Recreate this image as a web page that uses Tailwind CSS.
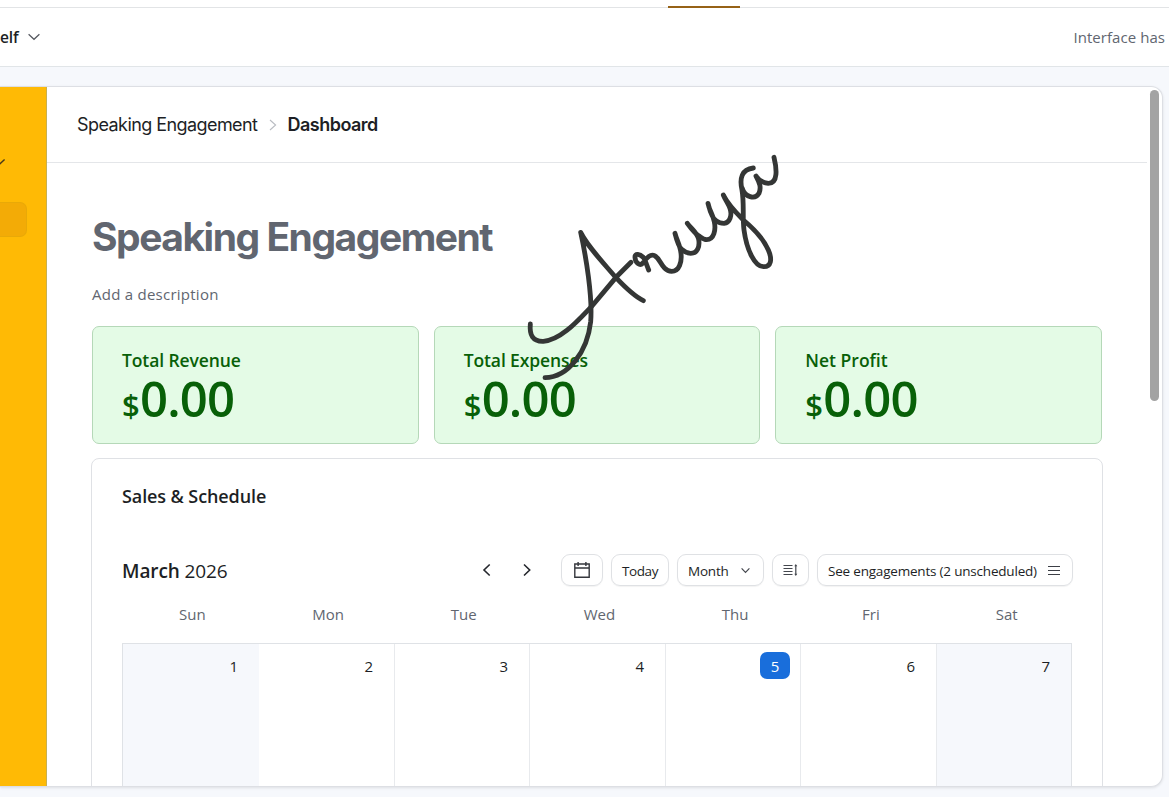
<!DOCTYPE html>
<html lang="en">
<head>
<meta charset="utf-8">
<title>Speaking Engagement – Dashboard</title>
<script src="https://cdn.jsdelivr.net/npm/@tailwindcss/browser@4"></script>
</head>
<body class="relative flex h-[797px] w-[1169px] flex-col overflow-hidden bg-[#f6f8fc] font-['Open_Sans',sans-serif] text-[#1d1f25]">
  <div class="flex h-2 shrink-0 border-b border-[#e2e4e6] bg-white pl-[668px]"><div class="mt-[6px] h-[2px] w-[72px] bg-[#966216]"></div></div>
  <header class="flex h-[59px] shrink-0 items-center justify-between border-b border-[#e1e5e8] bg-white pr-[4px]">
    <div class="flex items-center">
      <span class="pt-[2px] text-[15.5px] font-semibold tracking-[-0.1px]">elf</span>
      <svg class="ml-[9px] h-2 w-3" viewBox="0 0 12 8" fill="none" stroke="#55585f" stroke-width="1.2"><path d="M.6 1.2 6 6.3l5.4-5.1"/></svg>
    </div>
    <span class="text-[15px] tracking-[0.05px] text-[#616670]">Interface has</span>
  </header>
  <div class="mt-[19px] flex h-[701px] w-[1163px] shrink-0 overflow-hidden rounded-r-[12px] border border-l-0 border-[#dddfe4] bg-white shadow-[0_1px_3px_rgba(0,0,0,0.1)]">
    <aside class="flex w-[47px] shrink-0 flex-col border-r border-[#c8b050] bg-[#ffba05]">
      <svg class="mt-[71px] h-[8px] w-[6px]" viewBox="0 0 6 8" fill="none" stroke="#49391a" stroke-width="1.4"><path d="M-1 6.6 4.6 1.6"/></svg>
      <div class="mt-[36px] h-[35px] w-[27px] rounded-r-[7px] border border-l-0 border-[#e9a907] bg-[#f3ab06]"></div>
    </aside>
    <main class="relative flex min-w-0 grow flex-col">
      <nav class="mr-[15px] flex h-[76px] shrink-0 items-center border-b border-[#e4e6e9] pl-[30px] font-[Inter,sans-serif] text-[18px]">
        <span class="w-[181px] whitespace-nowrap tracking-[-0.57px]">Speaking Engagement</span>
        <svg class="ml-[11px] h-3 w-2" viewBox="0 0 8 12" fill="none" stroke="#b9bcc2" stroke-width="1.1"><path d="m1 1 5.6 5L1 11"/></svg>
        <span class="ml-[10.5px] font-semibold tracking-[-0.52px]">Dashboard</span>
      </nav>
      <div class="flex min-h-0 grow flex-col pl-[45px] pr-[60px]">
        <h1 class="mt-[48px] h-[52px] whitespace-nowrap font-[Inter,sans-serif] text-[39px] font-bold leading-[52px] tracking-[-1.48px] text-[#616670]">Speaking Engagement</h1>
        <p class="mt-[20px] h-[22px] text-[15px] leading-[22px] tracking-[0.25px] text-[#616670]">Add a description</p>
        <div class="mt-[21px] grid w-[1010px] shrink-0 grid-cols-3 gap-[15px] text-[#086008]">
          <section class="h-[118px] rounded-[7px] border border-[#b5d8b8] bg-[#e4fbe6] px-[29px] pt-[22px]">
            <h2 class="h-[22px] text-[17.5px] font-semibold leading-[22px] tracking-[-0.1px]">Total Revenue</h2>
            <div class="mt-[5px] flex h-[44px] items-baseline font-semibold leading-[44px]"><span class="w-[18px] text-[31px]">$</span><span class="text-[49px] leading-[44px] tracking-[-0.8px]">0.00</span></div>
          </section>
          <section class="h-[118px] rounded-[7px] border border-[#b5d8b8] bg-[#e4fbe6] px-[29px] pt-[22px]">
            <h2 class="h-[22px] text-[17.5px] font-semibold leading-[22px] tracking-[-0.1px]">Total Expenses</h2>
            <div class="mt-[5px] flex h-[44px] items-baseline font-semibold leading-[44px]"><span class="w-[18px] text-[31px]">$</span><span class="text-[49px] leading-[44px] tracking-[-0.8px]">0.00</span></div>
          </section>
          <section class="h-[118px] rounded-[7px] border border-[#b5d8b8] bg-[#e4fbe6] px-[29px] pt-[22px]">
            <h2 class="h-[22px] text-[17.5px] font-semibold leading-[22px]">Net Profit</h2>
            <div class="mt-[5px] flex h-[44px] items-baseline font-semibold leading-[44px]"><span class="w-[18px] text-[31px]">$</span><span class="text-[49px] leading-[44px] tracking-[-0.8px]">0.00</span></div>
          </section>
        </div>
        <section class="-ml-px mt-[14px] flex h-[400px] w-[1012px] shrink-0 flex-col rounded-t-[8px] border border-[#dfe1e5] px-[30px] pt-[25px]">
          <h2 class="h-6 shrink-0 text-[18px] font-semibold leading-6 tracking-[-0.1px]">Sales &amp; Schedule</h2>
          <div class="mt-[46px] flex h-[32px] shrink-0 items-center *:shrink-0">
            <div class="w-[360px] whitespace-nowrap pt-[2px] text-[19px] tracking-[-0.1px]"><span class="font-semibold">March</span> 2026</div>
            <svg class="h-[14px] w-[10px]" viewBox="0 0 10 14" fill="none" stroke="#25272d" stroke-width="1.6"><path d="M7.7 1.5 2 7l5.7 5.5"/></svg>
            <svg class="ml-[30px] h-[14px] w-[10px]" viewBox="0 0 10 14" fill="none" stroke="#25272d" stroke-width="1.6"><path d="M2 1.5 7.7 7 2 12.5"/></svg>
            <div class="ml-[29px] flex gap-2 text-[13.5px] tracking-[-0.2px] *:flex *:h-[32px] *:items-center *:rounded-[9px] *:border *:border-[#dfe1e4] *:shadow-[0_1px_1px_rgba(0,0,0,0.05)]">
              <button class="w-[42px] justify-center" aria-label="Pick date"><svg class="size-[18px]" viewBox="0 0 18 18" fill="none" stroke="#35373d" stroke-width="1.4"><path d="M1.8 3h14.4v13.2H1.8zM1.8 7h14.4M5.1 1v4M12.9 1v4"/></svg></button>
              <button class="w-[58px] justify-center pt-[2px] tracking-[-0.4px]">Today</button>
              <button class="w-[87px] pl-[10px]"><span class="w-[53px] pt-[2px] text-left">Month</span><svg class="h-[7px] w-[9px]" viewBox="0 0 9 7" fill="none" stroke="#44474e" stroke-width="1.2"><path d="m.6 1.3 3.9 4 3.9-4"/></svg></button>
              <button class="w-[37px] justify-center" aria-label="Row height"><svg class="h-[14px] w-[15px]" viewBox="0 0 15 14" fill="none" stroke="#44474e" stroke-width="1.2"><path d="M.5 2.5h9M.5 5.5h9M.5 8.5h9M.5 11.5h9M12.8 2.5v9"/><path d="M11.3 3.2 12.8 1l1.5 2.2M11.3 10.8l1.5 2.2 1.5-2.2" fill="#44474e" stroke="none"/></svg></button>
              <button class="w-[256px] pl-[10px]"><span class="w-[220px] whitespace-nowrap pt-[2px] text-left">See engagements (2 unscheduled)</span><svg class="mt-px h-[12px] w-[12px]" viewBox="0 0 12 12" fill="none" stroke="#3c3f46" stroke-width="1.2"><path d="M0 1.5h12M0 5.5h12M0 9.5h12"/></svg></button>
            </div>
          </div>
          <div class="mt-[16px] grid h-[41px] w-[950px] shrink-0 grid-cols-7 text-center text-[15px] leading-[24px] text-[#616670] *:pl-[5px]">
            <span>Sun</span><span>Mon</span><span>Tue</span><span>Wed</span><span>Thu</span><span>Fri</span><span>Sat</span>
          </div>
          <div class="grid w-[950px] grow grid-cols-[136px_136px_135px_136px_135px_136px_134px] border border-b-0 border-[#dfe2e6] text-right text-[15px] leading-[44px] *:border-[#e8eaed]">
            <div class="bg-[#f6f8fc] pr-[21px]">1</div>
            <div class="border-r pr-[21px]">2</div>
            <div class="border-r pr-[21px]">3</div>
            <div class="border-r pr-[21px]">4</div>
            <div class="flex justify-end border-r pr-[10px]"><span class="mt-2 h-[27px] w-[30px] rounded-[7px] bg-[#196edb] text-center leading-[28px] text-white">5</span></div>
            <div class="border-r pr-[21px]">6</div>
            <div class="bg-[#f6f8fc] pr-[21px]">7</div>
          </div>
        </section>
      </div>
      <div class="absolute right-[3px] top-[3px] h-[311px] w-[9px] rounded-full bg-[#a3a3a3]"></div>
    </main>
  </div>
  <svg class="absolute left-[500px] top-[140px] h-[250px] w-[300px]" viewBox="0 0 900 750" fill="none" stroke="#343635" stroke-width="14.5" stroke-linecap="round" stroke-linejoin="round" role="img" aria-label="Signature">
    <path d="M135 713C205 712 262 635 272 545C278 470 258 350 242 277C262 318 300 357 348 413C380 447 405 470 430 482"/>
    <path d="M91 552C88 585 98 605 130 604C185 600 240 535 276 498L348 412L393 367"/>
    <path d="M446 390C440 375 436 360 430 352C420 343 404 338 405 352C406 370 420 378 428 370C440 355 450 340 464 347C482 355 485 393 515 394C538 394 546 365 543 340C541 318 530 300 525 280C530 300 538 322 545 328C556 338 565 340 572 340C592 340 600 320 596 298C592 278 575 268 562 250C575 268 590 284 600 290C610 297 615 299 620 299C642 299 648 270 643 245C638 222 628 212 624 190C632 222 642 240 650 243C658 250 665 250 672 250C690 248 697 225 690 205C686 193 676 180 670 165C682 190 705 215 730 240C760 265 790 295 805 330C818 360 812 380 792 380C765 382 740 330 732 270C727 230 733 190 726 150C718 115 725 88 760 84M726 143C735 172 765 180 777 160C784 143 780 130 768 108C776 120 787 128 805 130C835 130 830 85 822 52"/>
  </svg>
</body>
</html>
